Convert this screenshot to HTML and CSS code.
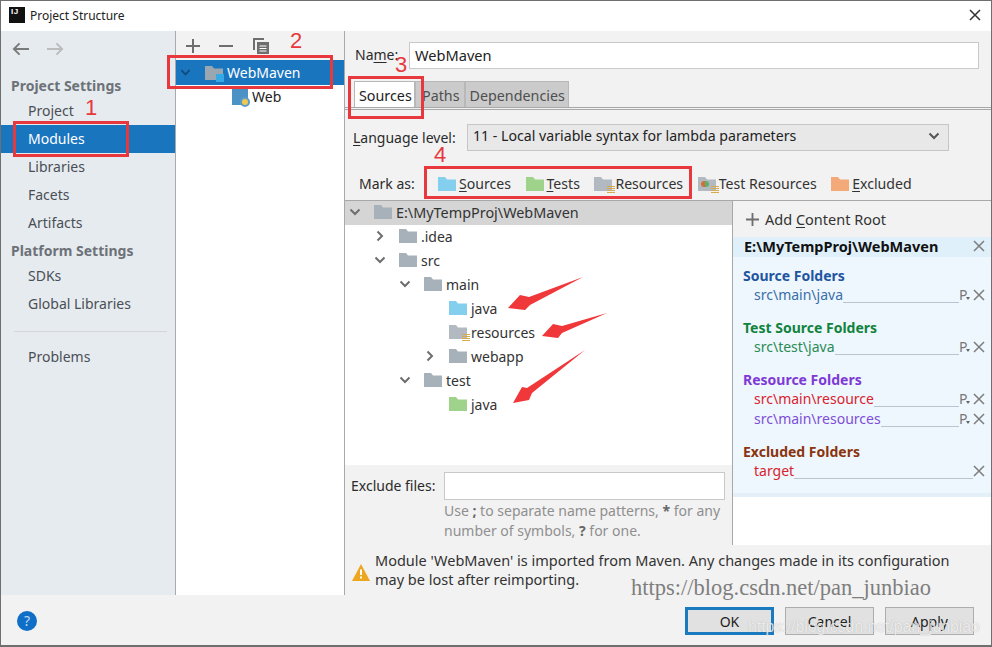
FILE: index.html
```html
<!DOCTYPE html>
<html lang="en">
<head>
<meta charset="utf-8">
<title>Project Structure</title>
<link rel="stylesheet" href="styles.css">
</head>
<body>
<svg class="defs" width="0" height="0" aria-hidden="true">
  <symbol id="folder" viewBox="0 0 18 14"><path d="M0 0h7l2 2.500h9V14H0z"/></symbol>
  <symbol id="chev-d" viewBox="0 0 12 12"><path d="M1.500 3.500 6 8l4.500-4.500" fill="none" stroke="currentColor" stroke-width="2"/></symbol>
  <symbol id="chev-r" viewBox="0 0 12 12"><path d="M3.500 1.500 8 6l-4.500 4.500" fill="none" stroke="currentColor" stroke-width="2"/></symbol>
  <symbol id="close" viewBox="0 0 12 12"><path d="M1 1l10 10M11 1 1 11" fill="none" stroke="currentColor" stroke-width="1.500"/></symbol>
  <symbol id="res-lines" viewBox="0 0 8 8"><path d="M0 .5h8M0 2.500h8M0 4.500h8M0 6.500h8" fill="none" stroke="#d9a94e" stroke-width="1.200"/></symbol>
</svg>

<div class="window">
  <header class="titlebar">
    <div class="app-icon">IJ</div>
    <div class="title">Project Structure</div>
    <svg class="win-close"><use href="#close"/></svg>
  </header>

  <div class="main">
    <nav class="sidebar">
      <div class="nav-arrows">
        <svg class="nav-arrow" viewBox="0 0 18 14"><path d="M18 7H2M8 1 2 7l6 6" fill="none" stroke="currentColor" stroke-width="2"/></svg>
        <svg class="nav-arrow off" viewBox="0 0 18 14"><path d="M0 7h16M10 1l6 6-6 6" fill="none" stroke="currentColor" stroke-width="2"/></svg>
      </div>
      <div class="nav-head">Project Settings</div>
      <div class="nav-item">Project</div>
      <div class="nav-item selected">Modules</div>
      <div class="nav-item">Libraries</div>
      <div class="nav-item">Facets</div>
      <div class="nav-item">Artifacts</div>
      <div class="nav-head">Platform Settings</div>
      <div class="nav-item">SDKs</div>
      <div class="nav-item">Global Libraries</div>
      <div class="nav-sep"></div>
      <div class="nav-item">Problems</div>
    </nav>

    <section class="modules">
      <div class="mod-toolbar">
        <svg class="tool" viewBox="0 0 14 14"><path d="M7 0v14M0 7h14" fill="none" stroke="currentColor" stroke-width="2"/></svg>
        <svg class="tool" viewBox="0 0 14 14"><path d="M0 7h14" fill="none" stroke="currentColor" stroke-width="2"/></svg>
        <svg class="tool copy" viewBox="0 0 16 16"><path d="M1 12V1h10" fill="none" stroke="currentColor" stroke-width="2"/><path d="M4 4h12v12H4z" fill="currentColor"/><path d="M6.500 8h7M6.500 10.500h7M6.500 13h7" stroke="#fff"/></svg>
      </div>
      <div class="mod-row selected">
        <svg class="mod-chev"><use href="#chev-d"/></svg>
        <span class="mod-folder">
          <svg class="folder f-mod"><use href="#folder"/></svg>
          <i class="mod-badge"></i>
        </span>
        <span>WebMaven</span>
      </div>
      <div class="mod-row child">
        <span class="web-icon"><i class="web-dot"></i></span>
        <span>Web</span>
      </div>
    </section>

    <section class="detail">
      <div class="name-row">
        <label class="name-label">Na<u>m</u>e:</label>
        <div class="name-input">WebMaven</div>
      </div>
      <div class="tabs">
        <div class="tab active">Sources</div>
        <div class="tab">Paths</div>
        <div class="tab">Dependencies</div>
      </div>
      <div class="lang-row">
        <label><u>L</u>anguage level:</label>
        <div class="combo">
          <span>11 - Local variable syntax for lambda parameters</span>
          <svg class="combo-chev"><use href="#chev-d"/></svg>
        </div>
      </div>
      <div class="mark-row">
        <span class="mark-label">Mark as:</span>
        <span class="mark"><svg class="folder f-blue"><use href="#folder"/></svg><span><u>S</u>ources</span></span>
        <span class="mark"><svg class="folder f-green"><use href="#folder"/></svg><span><u>T</u>ests</span></span>
        <span class="mark"><span class="res-folder"><svg class="folder f-lgray"><use href="#folder"/></svg><svg class="res-lines"><use href="#res-lines"/></svg></span><span>Resources</span></span>
        <span class="mark"><span class="res-folder"><svg class="folder f-lgray"><use href="#folder"/></svg><i class="test-dot"></i><svg class="res-lines"><use href="#res-lines"/></svg></span><span>Test Resources</span></span>
        <span class="mark"><svg class="folder f-orange"><use href="#folder"/></svg><span><u>E</u>xcluded</span></span>
      </div>

      <div class="split">
        <div class="left-col">
          <div class="tree">
            <div class="tree-row root d0"><svg class="chev"><use href="#chev-d"/></svg><svg class="folder f-gray"><use href="#folder"/></svg><span>E:\MyTempProj\WebMaven</span></div>
            <div class="tree-row d1"><svg class="chev"><use href="#chev-r"/></svg><svg class="folder f-gray"><use href="#folder"/></svg><span>.idea</span></div>
            <div class="tree-row d1"><svg class="chev"><use href="#chev-d"/></svg><svg class="folder f-gray"><use href="#folder"/></svg><span>src</span></div>
            <div class="tree-row d2"><svg class="chev"><use href="#chev-d"/></svg><svg class="folder f-gray"><use href="#folder"/></svg><span>main</span></div>
            <div class="tree-row d3"><span class="chev"></span><svg class="folder f-blue"><use href="#folder"/></svg><span>java</span></div>
            <div class="tree-row d3"><span class="chev"></span><span class="res-folder"><svg class="folder f-lgray"><use href="#folder"/></svg><svg class="res-lines"><use href="#res-lines"/></svg></span><span>resources</span></div>
            <div class="tree-row d3"><svg class="chev"><use href="#chev-r"/></svg><svg class="folder f-gray"><use href="#folder"/></svg><span>webapp</span></div>
            <div class="tree-row d2"><svg class="chev"><use href="#chev-d"/></svg><svg class="folder f-gray"><use href="#folder"/></svg><span>test</span></div>
            <div class="tree-row d3"><span class="chev"></span><svg class="folder f-green"><use href="#folder"/></svg><span>java</span></div>
          </div>
          <div class="exclude">
            <div class="exclude-row">
              <label>Exclude files:</label>
              <div class="exclude-input"></div>
            </div>
            <div class="hint">
              <div>Use <b>;</b> to separate name patterns, <b>*</b> for any</div>
              <div>number of symbols, <b>?</b> for one.</div>
            </div>
          </div>
        </div>

        <aside class="roots">
          <div class="add-root"><svg class="add-plus" viewBox="0 0 14 14"><path d="M7 0v14M0 7h14" fill="none" stroke="currentColor" stroke-width="2"/></svg><span>Add <u>C</u>ontent Root</span></div>
          <div class="root-path"><b>E:\MyTempProj\WebMaven</b><svg class="x"><use href="#close"/></svg></div>
          <div class="root-body">
            <div class="group">
              <div class="group-head c-source">Source Folders</div>
              <div class="group-item c-source-i"><span>src\main\java</span><i class="leader"></i><span class="p">P</span><svg class="x"><use href="#close"/></svg></div>
            </div>
            <div class="group">
              <div class="group-head c-test">Test Source Folders</div>
              <div class="group-item c-test-i"><span>src\test\java</span><i class="leader"></i><span class="p">P</span><svg class="x"><use href="#close"/></svg></div>
            </div>
            <div class="group">
              <div class="group-head c-res">Resource Folders</div>
              <div class="group-item c-red"><span>src\main\resource</span><i class="leader"></i><span class="p">P</span><svg class="x"><use href="#close"/></svg></div>
              <div class="group-item c-res-i"><span>src\main\resources</span><i class="leader"></i><span class="p">P</span><svg class="x"><use href="#close"/></svg></div>
            </div>
            <div class="group">
              <div class="group-head c-exc">Excluded Folders</div>
              <div class="group-item c-red"><span>target</span><i class="leader"></i><svg class="x"><use href="#close"/></svg></div>
            </div>
          </div>
          <div class="root-strip"></div>
        </aside>
      </div>

      <div class="warning">
        <svg class="warn-icon" viewBox="0 0 18 17"><path d="M9 0 18 17H0z" fill="#eda71f"/><path d="M8 5.500h2V11H8zM8 12.500h2v2H8z" fill="#fff"/></svg>
        <p>Module 'WebMaven' is imported from Maven. Any changes made in its configuration may be lost after reimporting.</p>
      </div>
    </section>
  </div>

  <footer class="footer">
    <div class="help">?</div>
    <div class="buttons">
      <button class="btn default">OK</button>
      <button class="btn">Cancel</button>
      <button class="btn">Apply</button>
    </div>
  </footer>
</div>

<div class="mark-box box1"></div>
<div class="mark-box box2"></div>
<div class="mark-box box3"></div>
<div class="mark-box box4"></div>
<div class="num n1">1</div>
<div class="num n2">2</div>
<div class="num n3">3</div>
<div class="num n4">4</div>
<svg class="arrows" viewBox="0 0 992 647">
  <path d="M583 277 529 297 520 295 508 308 525 310 530 305z"/>
  <path d="M607 313 562 326 553 324 542 336 558 338 562 333z"/>
  <path d="M585 350 527 388 522 387 513 403 529 400 532 393z"/>
</svg>
<div class="wm-dark">https://blog.csdn.net/pan_junbiao</div>
<div class="wm-light">https://blog.csdn.net/pan_junbiao</div>
</body>
</html>
```
FILE: styles.css
```css
* { box-sizing: border-box; }
html, body { margin: 0; padding: 0; }
body {
  width: 992px; height: 647px; overflow: hidden; position: relative;
  font-family: "Noto Sans", "Liberation Sans", sans-serif;
  font-size: 14px; color: #2b2b2b; background: #f2f2f2;
}
.defs { position: absolute; }
svg { display: block; flex: none; }
u { text-decoration-thickness: 1px; text-underline-offset: 2px; }

.window {
  height: 647px; display: flex; flex-direction: column;
  border: 1px solid #6f6f6f; border-width: 1px 1px 2px 1px;
}
.titlebar {
  height: 30px; flex: none; background: #fff; display: flex; align-items: center;
  padding: 0 9px 2px 8px;
}
.app-icon {
  width: 16px; height: 16px; background: #111; color: #fff; font-size: 8px; font-weight: 700;
  line-height: 10px; padding-left: 2px; font-family: "Liberation Sans", sans-serif; letter-spacing: .5px;
}
.title { margin-left: 5px; font-size: 12px; flex: 1; color: #222; }
.win-close { width: 12px; height: 12px; color: #333; margin-right: 1px; }

.main { flex: 1; display: flex; min-height: 0; }

.sidebar { width: 175px; flex: none; background: #e6ebf0; border-right: 1px solid #a9a9a9; }
.nav-arrows { height: 41px; display: flex; gap: 18px; padding: 11px 0 0 11px; }
.nav-arrow { width: 17px; height: 14px; color: #7a7a7a; }
.nav-arrow.off { color: #bcbcbc; }
.nav-head { height: 25px; line-height: 27px; padding-left: 10px; font-weight: 700; color: #6d7278; font-size: 14px; }
.nav-item { height: 28px; line-height: 28px; padding-left: 27px; color: #4a4f55; }
.nav-item.selected { background: #1a75bf; color: #fff; }
.nav-sep { height: 25px; margin: 0 8px 0 13px; position: relative; }
.nav-sep::after { content: ""; display: block; height: 1px; background: #d4d6d9; position: relative; top: 13px; }

.modules { width: 169px; flex: none; background: #fff; border-right: 1px solid #a9a9a9; }
.mod-toolbar { height: 29px; background: #f2f2f2; display: flex; align-items: center; gap: 19px; padding: 0 0 0 10px; color: #6e6e6e; }
.tool { width: 14px; height: 14px; }
.tool.copy { width: 16px; height: 16px; margin-left: 1px; }
.mod-row { height: 24px; display: flex; align-items: center; color: #222; }
.mod-row.selected { background: #1a75bf; color: #fff; height: 25px; padding-left: 4px; }
.mod-chev { width: 11px; height: 11px; color: #0e4c80; margin-right: 14px; }
.mod-folder { position: relative; width: 18px; height: 14px; margin-right: 4px; }
.mod-badge { position: absolute; right: -1px; bottom: -2px; width: 8px; height: 8px; background: #35a8e6; }
.mod-row.child { padding-left: 56px; padding-bottom: 1px; }
.web-icon { position: relative; width: 16px; height: 16px; background: #4b93c4; margin-right: 4px; }
.web-dot { position: absolute; right: -2px; bottom: -2px; width: 10px; height: 10px; border-radius: 50%; background: #f2c94c; border: 2px solid #5d9cc8; }

.folder { width: 18px; height: 14px; }
.f-mod { fill: #9aa7b0; }
.f-gray { fill: #a7b1b9; }
.f-lgray { fill: #b2b9c1; }
.f-blue { fill: #84cfee; }
.f-green { fill: #9fd28b; }
.f-orange { fill: #f4a978; }

.detail { flex: 1; min-width: 0; display: flex; flex-direction: column; background: #f2f2f2; }
.name-row { height: 50px; display: flex; align-items: flex-start; padding: 11px 12px 0 10px; flex: none; }
.name-label { line-height: 26px; width: 54px; }
.name-input { flex: 1; height: 27px; background: #fff; border: 1px solid #c9c9c9; line-height: 25px; padding-left: 5px; color: #222; font-size: 14.600px; }
.tabs { height: 29px; flex: none; display: flex; align-items: flex-end; padding-left: 9px; border-bottom: 3px double #a8a8a8; }
.tab { height: 26px; line-height: 27px; padding: 0 4px; background: #cbcbcb; border: 1px solid #b8b8b8; border-bottom: 0; color: #4f4f4f; font-size: 14.300px; white-space: nowrap; }
.tab.active { background: #fff; width: 61px; color: #222; }
.tab + .tab { padding: 0 4px 0 6px; }
.tab + .tab + .tab { padding: 0 3px 0 4px; }
.lang-row { height: 48px; flex: none; display: flex; align-items: center; padding: 6px 0 0 8px; }
.lang-row label { width: 114px; }
.combo { width: 482px; height: 27px; background: #e8e8e8; border: 1px solid #c6c6c6; display: flex; align-items: center; justify-content: space-between; padding: 0 8px 3px 5px; color: #222; font-size: 14.150px; }
.combo-chev { width: 12px; height: 12px; color: #555; }
.mark-row { height: 43px; flex: none; display: flex; align-items: center; border-bottom: 1px solid #a8a8a8; padding: 9px 0 0 14px; gap: 14.500px; }
.mark-label { width: 64px; margin-right: .500px; }
.mark { display: flex; align-items: center; gap: 3px; color: #333; font-size: 14.100px; }
.res-folder { position: relative; width: 18px; height: 14px; display: block; flex: none; }
.res-lines { position: absolute; right: -3px; bottom: -3px; width: 8px; height: 8px; }
.test-dot { position: absolute; left: 3px; top: 4px; width: 8px; height: 6px; border-radius: 3px; background: linear-gradient(90deg, #d2703a 50%, #5fae6a 50%); }

.split { height: 344px; flex: none; display: flex; }
.left-col { width: 387px; flex: none; display: flex; flex-direction: column; }
.tree { height: 264px; background: #fff; flex: none; }
.tree-row { height: 24px; display: flex; align-items: center; color: #333; padding-bottom: 2px; }
.tree-row .folder, .tree-row .res-folder { margin-right: 4px; }
.tree-row.root { background: #d5d5d5; font-size: 14.400px; }
.d0 { padding-left: 4px; }
.d1 { padding-left: 29px; }
.d2 { padding-left: 54px; }
.d3 { padding-left: 79px; }
.chev { width: 12px; height: 12px; margin-right: 13px; color: #6e6e6e; flex: none; display: block; }
.exclude { flex: 1; padding: 7px 7px 0 6px; }
.exclude-row { display: flex; align-items: center; }
.exclude-row label { width: 93px; padding-bottom: 2px; }
.exclude-input { flex: 1; height: 28px; background: #fff; border: 1px solid #c9c9c9; }
.hint { margin-left: 93px; margin-top: 1px; color: #8f8f8f; line-height: 20px; }
.hint b { color: #666; }

.roots { flex: 1; display: flex; flex-direction: column; background: #fff; border-left: 1px solid #a8a8a8; }
.add-root { height: 36px; background: #f2f2f2; display: flex; align-items: center; gap: 6px; padding-left: 13px; color: #333; font-size: 14.500px; }
.add-plus { width: 13px; height: 13px; color: #6e6e6e; }
.root-path { height: 20px; background: #dff0fa; display: flex; align-items: center; justify-content: space-between; padding: 0 6px 2px 11px; color: #111; font-size: 14.500px; }
.x { width: 12px; height: 12px; color: #7d7d7d; flex: none; }
.root-body { background: #eef7fd; height: 236px; padding: 9px 6px 0 10px; }
.root-strip { height: 4px; background: #e3f0f8; }
.group { margin-bottom: 12px; }
.group-head { height: 20px; line-height: 20px; font-weight: 700; }
.group-item { height: 20px; display: flex; align-items: center; padding: 0 0 4px 11px; }
.group-item .x { margin-top: 2px; }
.leader { flex: 1; height: 1px; background: #b9c4cc; align-self: flex-end; margin-bottom: -1px; }
.p { color: #777; font-size: 14px; width: 14px; position: relative; }
.p::after { content: ""; position: absolute; left: 7px; top: 12px; border: 2.500px solid transparent; border-top: 3px solid #666; border-bottom: 0; }
.c-source { color: #1f55a0; }
.c-source-i { color: #3a6ea8; }
.c-test { color: #11833e; }
.c-test-i { color: #2a8a55; }
.c-res { color: #7e3ad6; }
.c-res-i { color: #7d4ed8; }
.c-exc { color: #8a3410; }
.c-red { color: #d9232e; }

.warning { flex: 1; display: flex; align-items: center; gap: 5px; padding: 0 30px 0 7px; color: #333; }
.warn-icon { width: 18px; height: 17px; margin-top: 5px; }
.warning p { margin: 0; line-height: 19px; font-size: 14.500px; }

.footer { height: 50px; flex: none; background: #f2f2f2; display: flex; align-items: center; justify-content: space-between; padding: 2px 17px 0 16px; }
.help { width: 20px; height: 20px; border-radius: 50%; background: #0f6fc6; color: #bcd9f4; text-align: center; line-height: 20px; font-size: 14px; }
.buttons { display: flex; gap: 11px; }
.btn { width: 89px; height: 28px; background: #e1e1e1; border: 1px solid #adadad; font: inherit; color: #222; padding: 0; }
.btn.default { border: 3px solid #1a7abf; }

.mark-box { position: absolute; border: 3px solid #e8383d; }
.box1 { left: 13px; top: 121px; width: 116px; height: 36px; }
.box2 { left: 167px; top: 55px; width: 166px; height: 34px; }
.box3 { left: 348px; top: 76px; width: 76px; height: 43px; }
.box4 { left: 424px; top: 166px; width: 268px; height: 33px; }
.num { position: absolute; color: #e8383d; font-family: "Liberation Sans", sans-serif; font-size: 22px; line-height: 24px; }
.n1 { left: 85px; top: 96px; }
.n2 { left: 290px; top: 29px; }
.n3 { left: 395px; top: 53px; }
.n4 { left: 434px; top: 143px; }
.arrows { position: absolute; left: 0; top: 0; width: 992px; height: 647px; fill: #f0373a; pointer-events: none; }
.wm-dark { position: absolute; left: 631px; top: 574px; font-family: "Liberation Serif", serif; font-size: 22.500px; line-height: 28px; color: #7e7e7e; white-space: nowrap; }
.wm-light { position: absolute; left: 748px; top: 619px; font-family: "Liberation Sans", sans-serif; font-size: 15.800px; line-height: 16px; color: rgba(255,255,255,.75); text-shadow: 0 0 1px rgba(120,120,120,.5); white-space: nowrap; }
```
